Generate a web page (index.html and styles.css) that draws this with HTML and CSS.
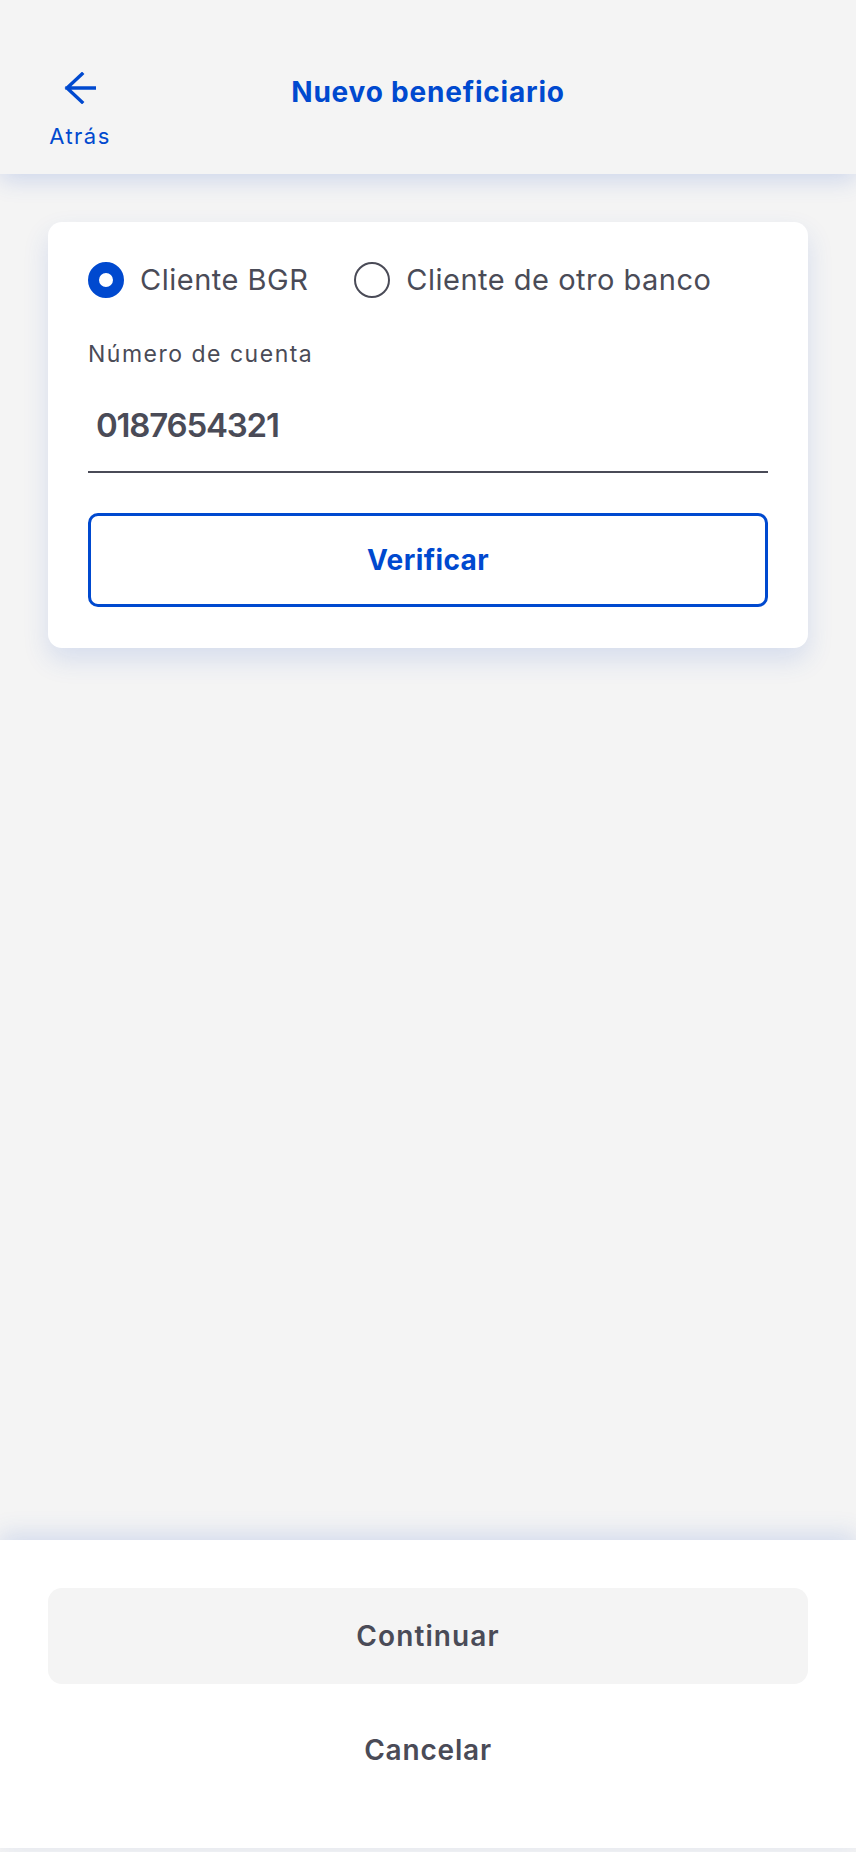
FILE: index.html
```html
<!DOCTYPE html>
<html lang="es">
<head>
<meta charset="utf-8">
<title>Nuevo beneficiario</title>
<link rel="stylesheet" href="styles.css">
</head>
<body>
<div class="screen">
  <header class="topbar">
    <div class="back">
      <svg class="back-icon" width="32" height="32" viewBox="0 0 32 32" aria-hidden="true">
        <path d="M3 16 H32 M18 2 L3 16 L18 30" fill="none" stroke="#0049cf" stroke-width="3.4" stroke-linecap="square" stroke-linejoin="miter"/>
      </svg>
      <span class="back-label">Atrás</span>
    </div>
    <h1 class="title">Nuevo beneficiario</h1>
    <div></div>
  </header>

  <main class="content">
    <section class="card">
      <div class="radios">
        <label class="radio">
          <span class="dot dot-on"></span>
          <span class="radio-text">Cliente BGR</span>
        </label>
        <label class="radio">
          <span class="dot"></span>
          <span class="radio-text">Cliente de otro banco</span>
        </label>
      </div>
      <div class="field-label">Número de cuenta</div>
      <div class="field-input"><span class="field-value">0187654321</span></div>
      <button class="btn-outline">Verificar</button>
    </section>
  </main>

  <footer class="actions">
    <button class="btn-primary">Continuar</button>
    <button class="btn-link">Cancelar</button>
  </footer>
</div>
</body>
</html>
```
FILE: styles.css
```css
* { box-sizing: border-box; }
html, body { margin: 0; padding: 0; }
body {
  background: #f4f4f4;
  font-family: Inter, "Open Sans", "Liberation Sans", sans-serif;
  color: #4a4b57;
}
.screen {
  display: flex;
  flex-direction: column;
  min-height: 1852px;
}
.topbar {
  position: relative;
  z-index: 2;
  height: 174px;
  background: #f4f4f4;
  box-shadow: 0 6px 22px rgba(50, 95, 200, 0.2);
  display: grid;
  grid-template-columns: 1fr auto 1fr;
  align-items: start;
  padding-top: 72px;
}
.back {
  width: 64px;
  margin-left: 48px;
  display: flex;
  flex-direction: column;
  align-items: center;
}
.back-icon { display: block; }
.back-label {
  margin-top: 19px;
  font-size: 22px;
  line-height: 27px;
  letter-spacing: 1.5px;
  color: #0049cf;
  white-space: nowrap;
}
.title {
  margin: 3px 0 0;
  font-size: 28px;
  line-height: 34px;
  font-weight: 700;
  letter-spacing: 0.8px;
  color: #0049cf;
}
.content {
  flex: 1;
  padding: 48px 48px 0;
}
.card {
  background: #fff;
  border-radius: 14px;
  padding: 40px 40px 41px;
  box-shadow: 0 12px 26px rgba(50, 95, 200, 0.15);
}
.radios {
  display: flex;
  align-items: center;
  gap: 46px;
  height: 36px;
}
.radio {
  display: flex;
  align-items: center;
  gap: 16px;
}
.dot {
  width: 36px;
  height: 36px;
  border-radius: 50%;
  border: 2px solid #4a4b57;
  flex: none;
}
.dot-on {
  border: 11px solid #0049cf;
  background: #fff;
}
.radio-text {
  font-size: 29px;
  line-height: 36px;
  letter-spacing: 0.5px;
}
.field-label {
  margin-top: 42px;
  font-size: 23px;
  line-height: 28px;
  letter-spacing: 1.5px;
}
.field-input {
  margin-top: 14px;
  height: 91px;
  padding: 0 8px 3px;
  border-bottom: 2px solid #4a4b57;
  display: flex;
  align-items: center;
}
.field-value {
  font-size: 33px;
  line-height: 40px;
  font-weight: 600;
  letter-spacing: -1.2px;
}
.btn-outline {
  display: block;
  width: 100%;
  margin-top: 40px;
  height: 94px;
  background: #fff;
  border: 3px solid #0049cf;
  border-radius: 10px;
  font-family: inherit;
  font-size: 28px;
  font-weight: 700;
  letter-spacing: 0.4px;
  color: #0049cf;
}
.actions {
  position: relative;
  z-index: 2;
  background: #fff;
  margin-bottom: 4px;
  padding: 48px 48px 50px;
  box-shadow: 0 -6px 22px rgba(50, 95, 200, 0.17);
  display: flex;
  flex-direction: column;
}
.btn-primary {
  height: 96px;
  border: 0;
  border-radius: 14px;
  background: #f4f4f4;
  font-family: inherit;
  font-size: 28px;
  font-weight: 600;
  letter-spacing: 1.1px;
  color: #4a4b57;
}
.btn-link {
  margin-top: 18px;
  height: 96px;
  border: 0;
  background: transparent;
  font-family: inherit;
  font-size: 28px;
  font-weight: 600;
  letter-spacing: 0.8px;
  color: #4a4b57;
}
```
